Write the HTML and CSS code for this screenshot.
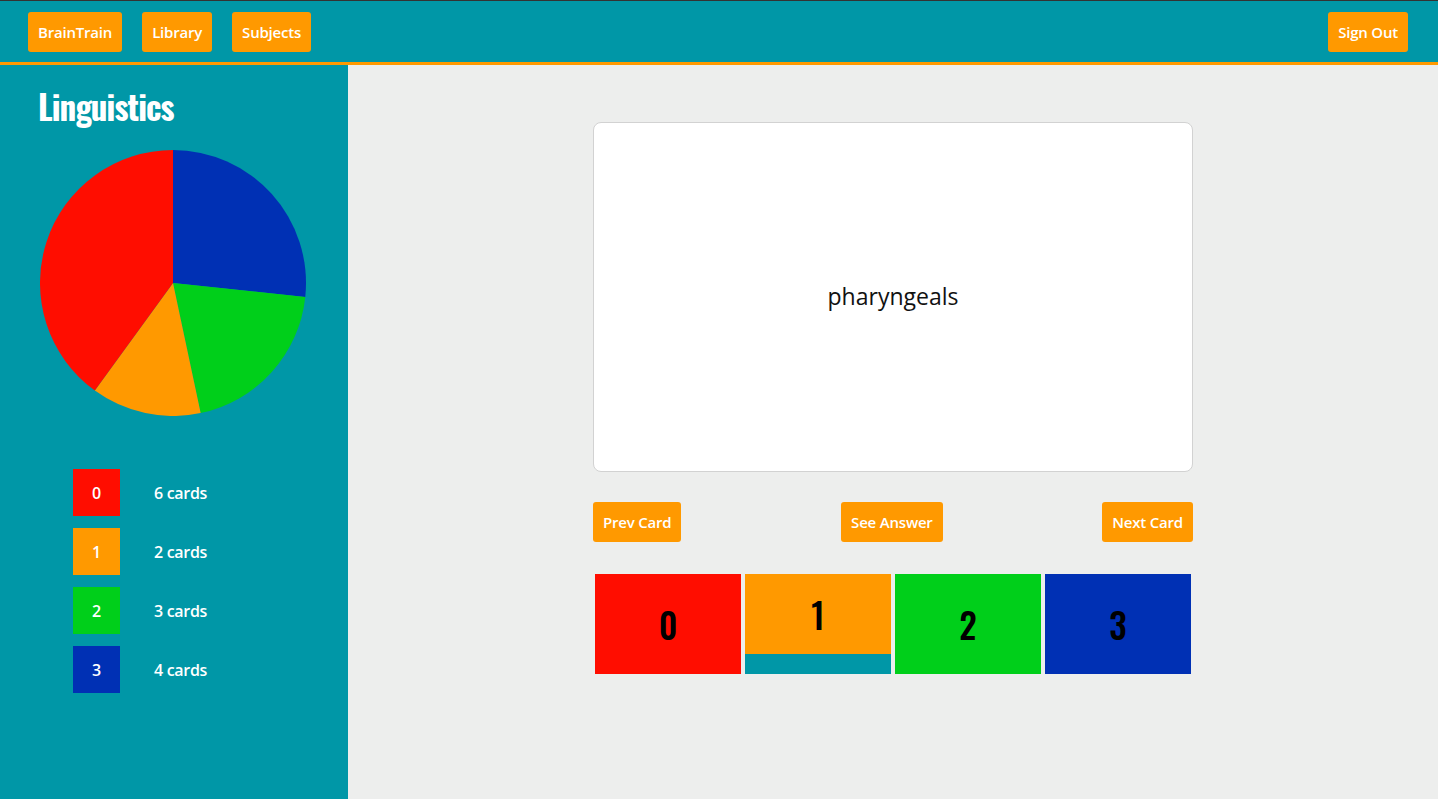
FILE: index.html
```html
<!DOCTYPE html>
<html>
<head>
<meta charset="utf-8">
<title>BrainTrain</title>
<link rel="stylesheet" href="styles.css">
</head>
<body>
<header class="topbar">
  <nav class="nav-left">
    <a class="btn" href="#">BrainTrain</a>
    <a class="btn" href="#">Library</a>
    <a class="btn" href="#">Subjects</a>
  </nav>
  <a class="btn" href="#">Sign Out</a>
</header>
<div class="layout">
  <aside class="sidebar">
    <h1 class="title">Linguistics</h1>
    <svg class="pie" width="266" height="266" viewBox="0 0 266 266">
      <path fill="#0030b4" d="M133 133 L133 0 A133 133 0 0 1 265.27 146.90 Z"/>
      <path fill="#00cf1a" d="M133 133 L265.27 146.90 A133 133 0 0 1 160.65 263.09 Z"/>
      <path fill="#ff9900" d="M133 133 L160.65 263.09 A133 133 0 0 1 54.82 240.60 Z"/>
      <path fill="#ff0d00" d="M133 133 L54.82 240.60 A133 133 0 0 1 133 0 Z"/>
    </svg>
    <ul class="legend">
      <li class="legend-row"><span class="swatch red">0</span><span class="count">6 cards</span></li>
      <li class="legend-row"><span class="swatch orange">1</span><span class="count">2 cards</span></li>
      <li class="legend-row"><span class="swatch green">2</span><span class="count">3 cards</span></li>
      <li class="legend-row"><span class="swatch blue">3</span><span class="count">4 cards</span></li>
    </ul>
  </aside>
  <main class="main">
    <div class="deck">
      <div class="card"><span class="card-text">pharyngeals</span></div>
      <div class="controls">
        <a class="btn" href="#">Prev Card</a>
        <a class="btn" href="#">See Answer</a>
        <a class="btn" href="#">Next Card</a>
      </div>
      <div class="scores">
        <div class="score red">0</div>
        <div class="score orange selected">1</div>
        <div class="score green">2</div>
        <div class="score blue">3</div>
      </div>
    </div>
  </main>
</div>
</body>
</html>
```
FILE: styles.css
```css
* { box-sizing: border-box; }
html, body { margin: 0; padding: 0; height: 100%; }
body {
  font-family: "Open Sans", "Noto Sans", sans-serif;
  background: #edeeed;
  display: flex;
  flex-direction: column;
}
.topbar {
  height: 65px;
  background: #0097a7;
  border-top: 1px solid #333;
  border-bottom: 3px solid #ff9900;
  display: flex;
  justify-content: space-between;
  align-items: flex-start;
  padding: 11px 30px 0 28px;
  flex-shrink: 0;
}
.nav-left { display: flex; gap: 20px; }
.btn {
  display: inline-block;
  height: 40px;
  line-height: 40px;
  padding: 0 10px;
  background: #ff9900;
  color: #fff;
  font-weight: 600;
  font-size: 15px;
  text-decoration: none;
  border-radius: 3px;
  letter-spacing: -0.2px;
}
.layout { flex: 1; display: flex; }
.sidebar {
  width: 348px;
  background: #0097a7;
  padding: 20px 0 0 0;
  flex-shrink: 0;
}
.title {
  margin: 0 0 0 38px;
  color: #fff;
  font-family: "Oswald", "Liberation Sans Narrow", "DejaVu Sans Condensed", sans-serif;
  font-weight: bold;
  font-size: 33px;
  line-height: 44px;
  height: 44px;
  letter-spacing: -0.9px;
}
.pie { display: block; margin: 21px 0 0 40px; }
.legend {
  list-style: none;
  margin: 53px 0 0 73px;
  padding: 0;
  display: flex;
  flex-direction: column;
  gap: 12px;
}
.legend-row { display: flex; align-items: center; }
.swatch {
  width: 47px; height: 47px;
  display: flex; align-items: center; justify-content: center;
  color: #fff; font-weight: 600; font-size: 16px;
}
.count { margin-left: 34px; color: #fff; font-weight: 600; font-size: 16px; letter-spacing: -0.3px; }
.red { background: #ff0d00; }
.orange { background: #ff9900; }
.green { background: #00cf1a; }
.blue { background: #0030b4; }
.main { flex: 1; display: flex; justify-content: center; padding-top: 57px; }
.deck { width: 600px; }
.card {
  height: 350px;
  background: #fff;
  border: 1px solid #d2d2d2;
  border-radius: 8px;
  display: flex;
  align-items: center;
  justify-content: center;
}
.card-text { font-size: 23px; color: #111; margin-top: -2px; }
.controls {
  display: flex;
  justify-content: space-between;
  margin-top: 30px;
}
.scores { display: flex; margin-top: 32px; }
.score {
  width: 146px;
  height: 100px;
  margin: 0 2px;
  display: flex;
  align-items: center;
  justify-content: center;
  font-family: "Oswald", "Liberation Sans Narrow", "DejaVu Sans Condensed", sans-serif;
  font-weight: 500;
  font-size: 35px;
  color: #000;
}
.score.selected { border-bottom: 20px solid #0097a7; }
```
